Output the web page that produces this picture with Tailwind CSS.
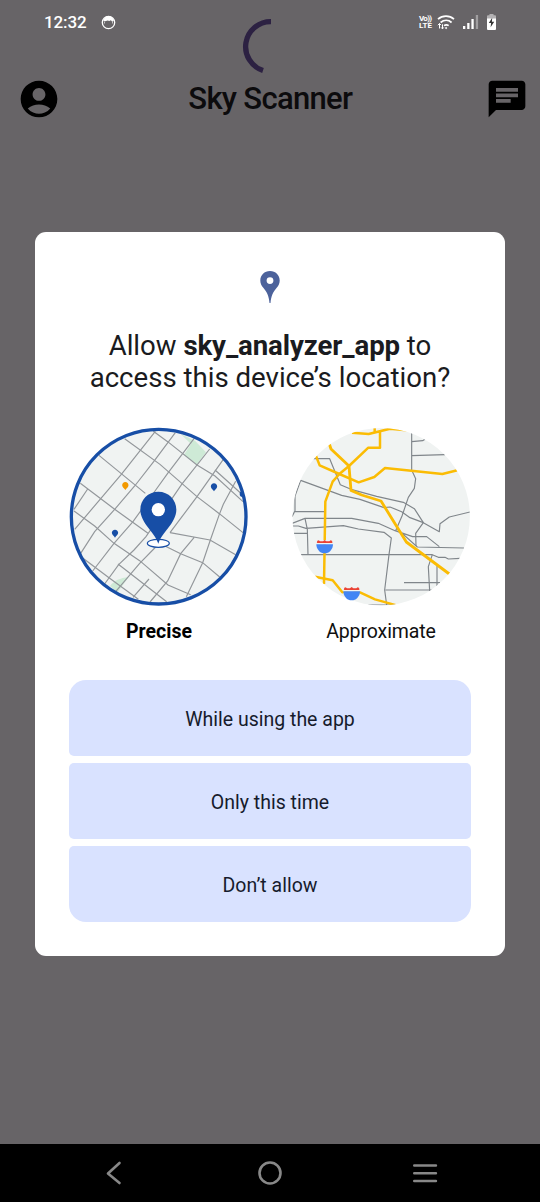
<!DOCTYPE html>
<html lang="en">
<head>
<meta charset="utf-8">
<title>Sky Scanner</title>
<script src="https://cdn.jsdelivr.net/npm/@tailwindcss/browser@4"></script>
</head>
<body class="bg-[#676467] font-['Roboto',sans-serif]">
<div class="relative flex h-[1202px] w-[540px] flex-col overflow-hidden bg-[#676467]">
  <!-- Status bar -->
  <div class="flex h-[44px] items-center justify-between pl-[44px] pr-[44px] text-white">
    <div class="flex items-center gap-[14px]">
      <span class="text-[17px] font-medium leading-[20px] tracking-[-0.1px]">12:32</span>
      <svg class="size-[15px]" viewBox="0 0 15 15"><circle cx="7.500" cy="7.500" r="6.200" fill="none" stroke="#fff" stroke-width="1.300"/><path d="M2.200 5.800C3 2.500 5 1 7.500 1s4.600 1.500 5.400 4.700l-1.700 1-1.300-1.500-1.600.9-1.600-.7-2.600.9z" fill="#fff"/><path d="M3.500 6.500v2M11.500 6.500v2" stroke="#ddd" stroke-width=".8"/></svg>
    </div>
    <div class="flex items-center">
      <div class="flex w-[14px] flex-col text-[8px] font-bold"><span class="h-[7px] leading-[7px] tracking-[-0.700px]">Vo))</span><span class="h-[7px] leading-[8px]">LTE</span></div>
      <svg class="ml-[4px] h-[15px] w-[18px]" viewBox="0 0 18 15" fill="none" stroke="#fff" stroke-width="1.700"><path d="M1 4.200C5.500 .2 12.500 .2 17 4.200M3.600 7.500C7 4.700 11.500 4.700 14.600 7.500M7 10.600c1.500-1 3.200-1 4.700 0"/><path d="M9.100 11.700l1.200 1.200-1.200 1.300-1.200-1.300z" fill="#fff" stroke="none"/><path d="M2.500 8.500v5M.9 10.200l1.600-1.700 1.600 1.700M5.500 9.300v4.600M4.100 12.400l1.400 1.500 1.300-1.500" stroke-width="1"/></svg>
      <svg class="ml-[7px] h-[14px] w-[17px]" viewBox="0 0 17 14" fill="#fff"><rect x="1" y="11" width="2.300" height="3"/><rect x="5.200" y="8" width="2.300" height="6"/><rect x="9.400" y="4" width="2.300" height="10"/><rect x="13.800" y="0" width="2.300" height="14" fill="#a09ea0"/></svg>
      <svg class="ml-[8px] h-[16px] w-[9px]" viewBox="0 0 9 16"><path d="M2.500 0h4v1.200H8a1 1 0 0 1 1 1V5H0V2.200a1 1 0 0 1 1-1h1.500z" fill="#b3b1b3"/><path d="M0 4.500h9V15a1 1 0 0 1-1 1H1a1 1 0 0 1-1-1z" fill="#fff"/><path d="M5.200 3.800L1.800 9h2.300L3.600 13.200 7.200 7.800H4.900z" fill="#333"/></svg>
    </div>
  </div>
  <svg class="absolute left-[240px] top-[17px] h-[58px] w-[36px]" viewBox="0 0 36 58" fill="none"><path d="M31 4.700A25 25 0 0 0 23 53.500" stroke="#2c2142" stroke-width="5.300"/></svg>

  <!-- App bar -->
  <div class="flex h-[110px] items-center justify-between pl-[16.500px] pr-[11px]">
    <svg class="size-[44px]" viewBox="0 0 24 24"><path d="M12 2C6.480 2 2 6.480 2 12s4.480 10 10 10 10-4.480 10-10S17.520 2 12 2zm0 4c1.930 0 3.500 1.570 3.500 3.500S13.930 13 12 13s-3.500-1.570-3.500-3.500S10.070 6 12 6zm0 14c-2.030 0-4.430-.82-6.140-2.880a9.947 9.947 0 0 1 12.280 0C16.430 19.180 14.030 20 12 20z"/></svg>
    <h1 class="mr-[5px] text-[31px] font-medium leading-[34px] tracking-[-0.700px] text-[#0c0b0d]">Sky Scanner</h1>
    <svg class="size-[44px]" viewBox="0 0 24 24"><path d="M20 2H4c-1.100 0-1.990.9-1.990 2L2 22l4-4h14c1.100 0 2-.9 2-2V4c0-1.100-.9-2-2-2zM6 9h12v2H6V9zm8 5H6v-2h8v2zm4-6H6V6h12v2z"/></svg>
  </div>

  <!-- Permission dialog -->
  <main class="mx-[35.300px] mt-[78px] flex h-[724px] flex-col items-center rounded-[11px] bg-white pt-[39px]">
    <svg class="h-[32px] w-[20px]" viewBox="0 0 20 32"><path fill-rule="evenodd" d="M10 0C4.400 0 .3 4.200.3 9.500c0 3 1.200 5.100 3 7.300C6.500 20.500 9 25 9.500 32h1c.5-7 3-11.500 6.200-15.200 1.800-2.200 3-4.300 3-7.300C19.700 4.200 15.600 0 10 0zm0 6.200a3.400 3.400 0 1 1 0 6.800 3.400 3.400 0 0 1 0-6.800z" fill="#4c629b"/></svg>
    <h2 class="mt-[27px] text-center text-[27.600px] leading-[32px] text-[#1a1b20]">Allow <b class="font-bold tracking-[-0.100px]">sky_analyzer_app</b> to<br>access this device’s location?</h2>

    <div class="mt-[33px] flex w-[402px] gap-[43px]">
      <div class="flex w-[180px] shrink-0 flex-col items-center">
        <svg class="size-[180px]" viewBox="27 21 540 540">
          <defs><clipPath id="precise"><circle cx="296" cy="290" r="262"/></clipPath></defs>
          <g clip-path="url(#precise)">
            <rect x="29" y="23" width="534" height="534" fill="#f0f3f2"/>
            <path d="M362 42L405 62 438 97 411 133 372 104 393 72z" fill="#ceead6"/>
            <path d="M150 498C162 482 180 474 206 471L172 518z" fill="#ceead6"/>
            <g fill="none" stroke="#93979b" stroke-width="3.500">
              <path d="M286 34L184 163 44 328M346 38L281 125 224 198 164 268 104 335 62 400M402 56L323 160 285 213 219 305 162 370 98 453M449 87L365 193 258 350 222 390 176 434 125 504M490 118L411 230 330 338M290 378L239 430 165 517M267 477L219 532M83 207L42 268"/>
              <path d="M280 34L323 65 411 135 465 168 549 245M465 150L545 222M194 56L300 133 411 230 478 281 549 338M117 106L256 220M61 190L164 268 264 340M42 273L104 318 162 370 239 422 324 495 392 524M69 415L149 475 235 538M174 432L320 545"/>
              <path d="M527 184L490 253 478 283 450 363 428 428 379 530M330 338L450 360 527 404M315 378L362 401 428 428 479 471M402 353L362 401 323 483 270 546"/>
            </g>
            <circle cx="548" cy="222" r="9" fill="#174ea6"/>
          </g>
          <circle cx="296" cy="290" r="262" fill="none" stroke="#174ea6" stroke-width="10"/>
          <path d="M196 186c-5.500 0-9.500 4-9.500 9.500 0 6.500 6 8 9.500 14.500 3.500-6.500 9.500-8 9.500-14.500 0-5.500-4-9.500-9.500-9.500z" fill="#f29900"/>
          <g fill="#174ea6"><path d="M462 190c-5.500 0-9.500 4-9.500 9.500 0 6.500 6 8 9.500 14.500 3.500-6.500 9.500-8 9.500-14.500 0-5.500-4-9.500-9.500-9.500z"/><path d="M165 329c-5.500 0-9.500 4-9.500 9.500 0 6.500 6 8 9.500 14.500 3.500-6.500 9.500-8 9.500-14.500 0-5.500-4-9.500-9.500-9.500z"/></g>
          <ellipse cx="295" cy="370" rx="33" ry="12" fill="#fff" stroke="#174ea6" stroke-width="3.500"/>
          <path d="M295 215c-31 0-54 24-54 54 0 40 44 68 54 102 10-34 54-62 54-102 0-30-23-54-54-54z" fill="#174ea6"/>
          <circle cx="295" cy="269" r="20" fill="#fff"/>
        </svg>
        <span class="mt-[13px] text-[19.500px] font-bold leading-[24px] text-black">Precise</span>
      </div>
      <div class="flex w-[180px] shrink-0 flex-col items-center">
        <svg class="size-[180px]" viewBox="36 21 540 540">
          <defs><clipPath id="approx"><circle cx="303.500" cy="290" r="266"/></clipPath></defs>
          <g clip-path="url(#approx)">
            <rect x="37" y="23" width="534" height="534" fill="#f0f3f2"/>
            <g fill="none" stroke="#80868b" stroke-width="3.500" stroke-linejoin="round">
              <path d="M395 35V150L407 176 403 205 385 232 366 288 347 332M395 65L428 62 436 57M395 107L495 104"/>
              <path d="M100 116H149L181 194 213 208 290 229 370 247 403 266 430 308 407 340 408 378"/>
              <path d="M36 290L45 272V228L62 181 185 226 240 238 312 263 330 261 365 275 390 293 430 308 478 335 480 311 508 291 570 276"/>
              <path d="M45 275H135M36 310L75 295H215L295 310 345 332 398 350H440L478 380M36 318H55L78 325 190 317 235 327 312 337 334 354 327 404 314 510 320 555M75 295L82 328 84 404M40 340H82M350 325L412 381 552 384"/>
              <path d="M58 404H457L475 412H495L505 417 540 415M457 404L445 440 449 513M471 438V498M372 488H480M316 510H455M265 555H345"/>
            </g>
            <g fill="none" stroke="#fbbc04" stroke-width="7.500" stroke-linejoin="round">
              <path d="M216 38L266 42 330 26 380 31M284 24V38M300 37V83H265L207 138 178 162 158 185 136 245 132 492"/>
              <path d="M148 72L153 87 207 138 213 211 245 225 303 243 379 366 508 462" stroke-width="8.500"/>
              <path d="M108 108L119 136 178 162 236 187 283 171 315 144 487 162 532 151M105 470L158 481 187 517 214 509 240 517 285 538 350 556"/>
            </g>
          </g>
          <g id="shield"><path d="M109 360h50v14h-50z" fill="#f0f3f2"/><path d="M110 369c2-2 2-4 1-6l5-2 4 3h9l5-4 5 4h9l4-3 5 2c-1 2-1 4 1 6z" fill="#ea4335"/><path d="M109 373h50c0 13-9 25-20 27h-10c-11-2-20-14-20-27z" fill="#4285f4"/></g>
          <use href="#shield" x="81" y="141"/>
        </svg>
        <span class="mr-[2px] mt-[13px] text-[19.500px] leading-[24px] tracking-[-0.100px] text-[#101010]">Approximate</span>
      </div>
    </div>

    <div class="mt-[35.600px] flex w-[402.600px] flex-col gap-[6.400px] text-[19.500px] text-[#161b2c]">
      <button class="h-[76.600px] rounded-[5px] rounded-t-[17px] bg-[#d9e2ff] pt-[3px]">While using the app</button>
      <button class="h-[76.600px] rounded-[5px] bg-[#d9e2ff] pt-[3px]">Only this time</button>
      <button class="h-[76.600px] rounded-[5px] rounded-b-[17px] bg-[#d9e2ff] pt-[3px]">Don’t allow</button>
    </div>
  </main>

  <!-- System navigation -->
  <nav class="mt-auto flex h-[58px] items-center justify-between bg-black pl-[105px] pr-[102px]">
    <svg class="h-[24px] w-[18px]" viewBox="0 0 18 24" fill="none" stroke="#888" stroke-width="2.600" stroke-linecap="round" stroke-linejoin="round"><path d="M14.500 2L3 12.500 14.500 22"/></svg>
    <svg class="ml-[4px] size-[24px]" viewBox="0 0 24 24" fill="none" stroke="#888" stroke-width="2.600"><circle cx="12" cy="12" r="10.500"/></svg>
    <svg class="h-[20px] w-[26px]" viewBox="0 0 26 20" fill="none" stroke="#888" stroke-width="2.600" stroke-linecap="round"><path d="M2.300 2.500h21.600M2.300 10.200h21.600M2.300 18h21.600"/></svg>
  </nav>
</div>
</body>
</html>
